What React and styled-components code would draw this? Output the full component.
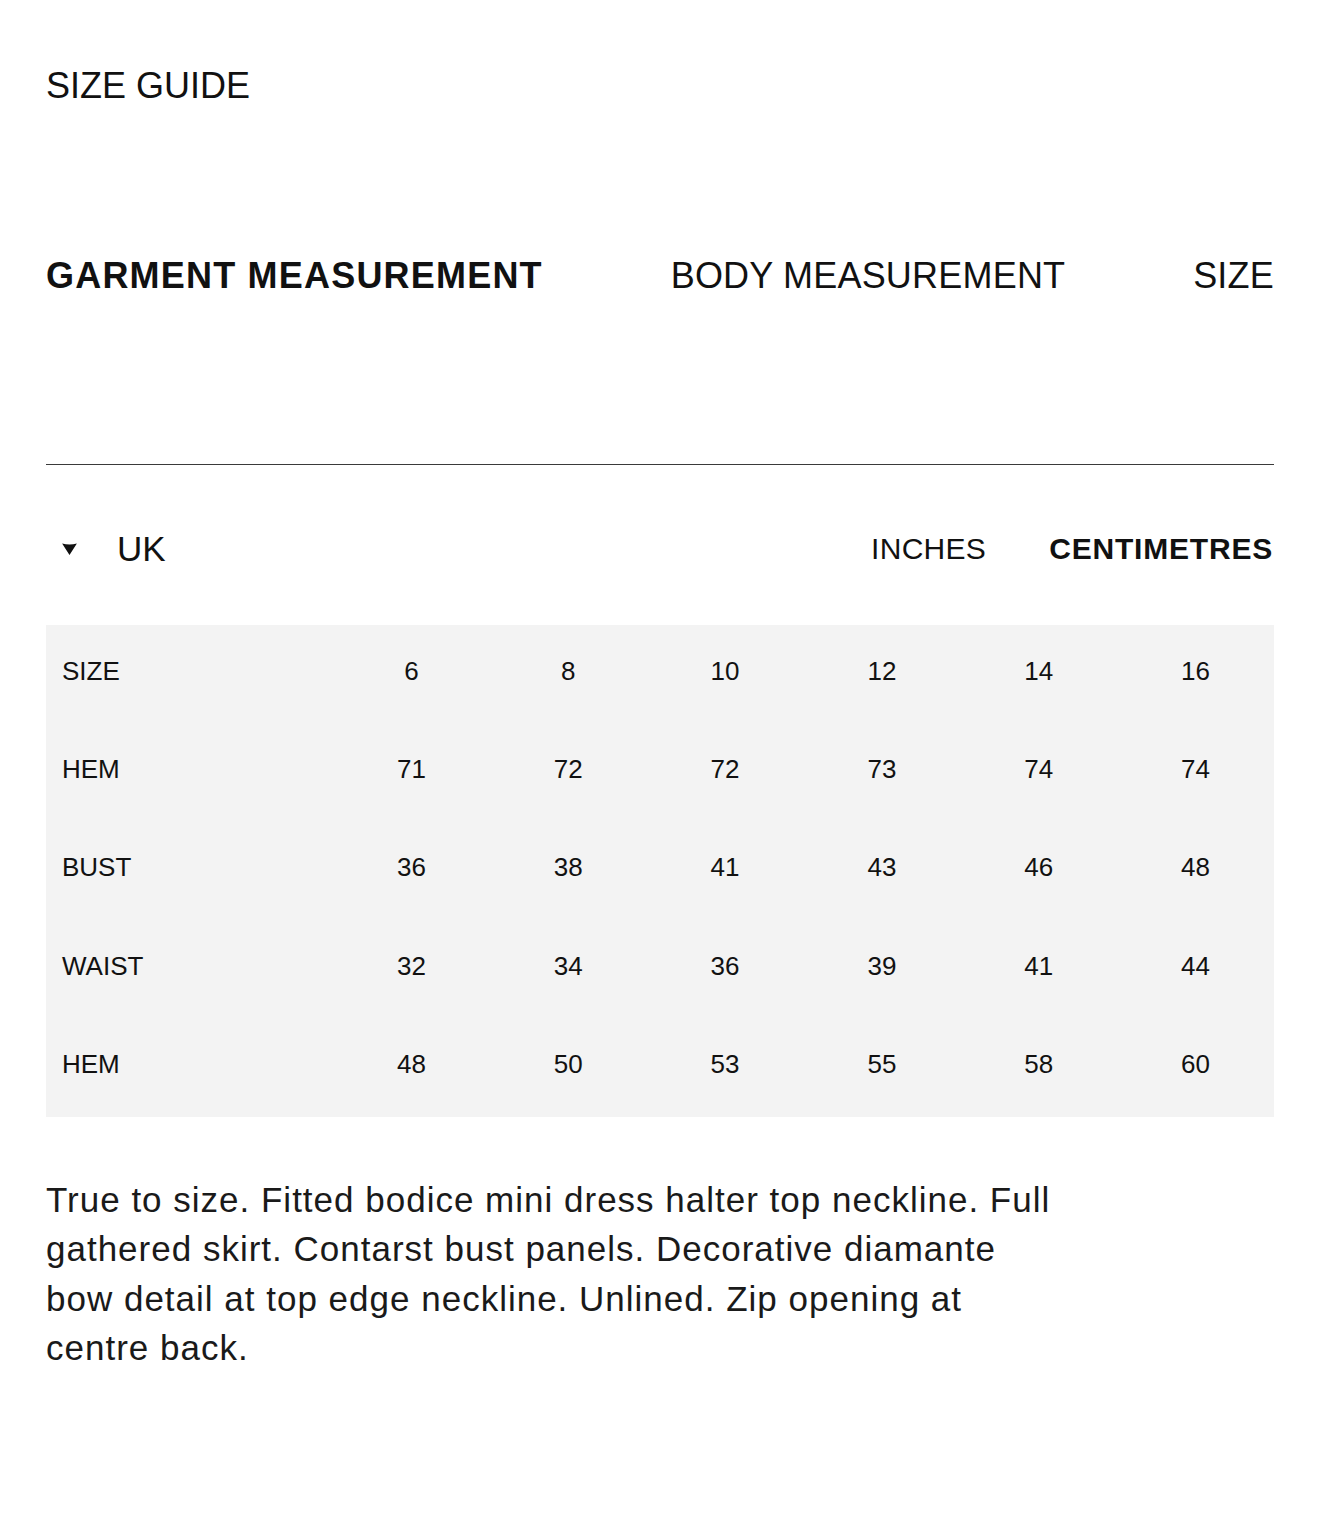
import React from 'react';
import styled, { createGlobalStyle } from 'styled-components';

const sizes = ['6', '8', '10', '12', '14', '16'];

const rows = [
    { label: 'SIZE', values: sizes },
    { label: 'HEM', values: ['71', '72', '72', '73', '74', '74'] },
    { label: 'BUST', values: ['36', '38', '41', '43', '46', '48'] },
    { label: 'WAIST', values: ['32', '34', '36', '39', '41', '44'] },
    { label: 'HEM', values: ['48', '50', '53', '55', '58', '60'] },
];

function App() {
    return (
        <>
            <GlobalStyle />
            <Page>
                <Heading>SIZE GUIDE</Heading>
                <Tabs>
                    <Tab active>GARMENT MEASUREMENT</Tab>
                    <Tab>BODY MEASUREMENT</Tab>
                    <Tab>SIZE</Tab>
                </Tabs>
                <Divider />
                <Controls>
                    <Region>
                        <Caret viewBox="0 0 16 13">
                            <path d="M0 0.5 Q8 2.5 16 0.5 L8 13 Z" fill="#111" />
                        </Caret>
                        <span>UK</span>
                    </Region>
                    <Units>
                        <Unit>INCHES</Unit>
                        <Unit active>CENTIMETRES</Unit>
                    </Units>
                </Controls>
                <Table>
                    {rows.map((row, i) => (
                        <Row key={i}>
                            <Label>{row.label}</Label>
                            {row.values.map((v, j) => (
                                <Cell key={j}>{v}</Cell>
                            ))}
                        </Row>
                    ))}
                </Table>
                <Description>
                    True to size. Fitted bodice mini dress halter top neckline. Full gathered skirt.
                    Contarst bust panels. Decorative diamante bow detail at top edge neckline.
                    Unlined. Zip opening at centre back.
                </Description>
            </Page>
        </>
    );
}

export default App;

const GlobalStyle = createGlobalStyle`
    body {
        margin: 0;
        background: #fff;
        font-family: "Liberation Sans", Arial, sans-serif;
        color: #111;
    }
`;

const Page = styled.div`
    width: 1320px;
    box-sizing: border-box;
    padding: 66px 46px 120px;
`;

const Heading = styled.h1`
    margin: 0;
    font-size: 36px;
    font-weight: 400;
    line-height: 40px;
`;

const Tabs = styled.div`
    display: flex;
    justify-content: space-between;
    align-items: center;
    margin-top: 150px;
`;

const Tab = styled.div`
    font-size: 36px;
    line-height: 40px;
    font-weight: ${p => (p.active ? 700 : 400)};
    letter-spacing: ${p => (p.active ? '1.2px' : '0.2px')};
    color: #111;
    cursor: pointer;
`;

const Divider = styled.hr`
    margin: 168px 0 0;
    border: 0;
    height: 1px;
    background: #3a3a3a;
`;

const Controls = styled.div`
    display: flex;
    justify-content: space-between;
    align-items: center;
    margin-top: 64px;
    height: 40px;
`;

const Region = styled.div`
    display: flex;
    align-items: center;
    gap: 40px;
    padding-left: 16px;
    font-size: 35px;
    line-height: 40px;
`;

const Caret = styled.svg`
    width: 15px;
    height: 12px;
`;

const Units = styled.div`
    display: flex;
    gap: 63px;
    padding-right: 1px;
`;

const Unit = styled.div`
    font-size: 30px;
    line-height: 40px;
    font-weight: ${p => (p.active ? 700 : 400)};
    letter-spacing: ${p => (p.active ? '0.8px' : '0.3px')};
`;

const Table = styled.div`
    margin-top: 56px;
    background: #f3f3f3;
`;

const Row = styled.div`
    display: grid;
    grid-template-columns: 287px repeat(6, 1fr);
    align-items: center;
    box-sizing: border-box;
    height: 98.4px;
    padding-bottom: 6px;
    font-size: 26px;
`;

const Label = styled.div`
    padding-left: 16px;
`;

const Cell = styled.div`
    text-align: center;
`;

const Description = styled.p`
    margin: 58px 0 0;
    max-width: 1020px;
    font-size: 35px;
    letter-spacing: 1px;
    line-height: 49.3px;
    color: #1a1a1a;
`;
